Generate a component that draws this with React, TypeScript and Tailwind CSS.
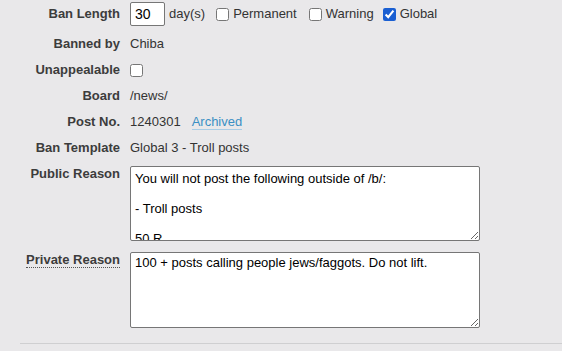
import React from 'react';

const font = { fontFamily: '"Liberation Sans", Arial, sans-serif' };

const Label = ({ children, abbr }: { children: React.ReactNode; abbr?: boolean }) => (
  <div className="w-[120px] shrink-0 text-right font-bold text-[#3c3c3c]">
    {abbr ? (
      <span className="border-b border-dotted border-[#555]">{children}</span>
    ) : (
      children
    )}
  </div>
);

const Check = ({ checked, label }: { checked?: boolean; label?: string }) => (
  <label className="flex items-center gap-[4px]">
    <input
      type="checkbox"
      defaultChecked={checked}
      className="m-0 w-[13px] h-[13px] accent-[#1a5fd2]"
    />
    {label && <span>{label}</span>}
  </label>
);

export default function App() {
  return (
    <div
      className="w-[562px] h-[351px] overflow-hidden bg-[#e9e8ea] text-[13px] text-[#333]"
      style={font}
    >
      {/* ban length */}
      <div className="flex h-[31px] pt-[2px] gap-[10px] leading-[24px]">
        <Label>Ban Length</Label>
        <div className="flex items-start">
          <input
            defaultValue="30"
            className="w-[35px] h-[24px] bg-white border border-[#767676] rounded-[2px] px-[4px] text-[14px] text-black outline-none"
          />
          <div className="flex items-center h-[24px]">
            <span className="ml-[4px]">day(s)</span>
            <div className="ml-[11px]">
              <Check label="Permanent" />
            </div>
            <div className="ml-[12px]">
              <Check label="Warning" />
            </div>
            <div className="ml-[9px]">
              <Check checked label="Global" />
            </div>
          </div>
        </div>
      </div>

      <div className="flex h-[26px] items-center gap-[10px]">
        <Label>Banned by</Label>
        <div>Chiba</div>
      </div>

      <div className="flex h-[26px] items-center gap-[10px]">
        <Label>Unappealable</Label>
        <Check />
      </div>

      <div className="flex h-[26px] items-center gap-[10px]">
        <Label>Board</Label>
        <div>/news/</div>
      </div>

      <div className="flex h-[26px] items-center gap-[10px]">
        <Label>Post No.</Label>
        <div className="flex items-center gap-[11px]">
          <span>1240301</span>
          <a href="#" className="text-[#3a8fc4] border-b border-[#a9cde6] leading-[15px]">
            Archived
          </a>
        </div>
      </div>

      <div className="flex h-[26px] items-center gap-[10px]">
        <Label>Ban Template</Label>
        <div>Global 3 - Troll posts</div>
      </div>

      {/* reasons */}
      <div className="flex pt-[5px] pb-[6px] gap-[10px] leading-[16px]">
        <Label>Public Reason</Label>
        <textarea
          className="w-[350px] h-[75px] bg-white border border-[#767676] rounded-[2px] px-[4px] pt-[4px] text-[13px] leading-[15px] text-black outline-none overflow-hidden"
          defaultValue={'You will not post the following outside of /b/:\n\n- Troll posts\n\n50 R'}
        />
      </div>

      <div className="flex pt-[5px] gap-[10px] leading-[16px]">
        <Label abbr>Private Reason</Label>
        <textarea
          className="w-[350px] h-[76px] bg-white border border-[#767676] rounded-[2px] px-[4px] pt-[2px] text-[13px] leading-[15px] text-black outline-none overflow-hidden"
          defaultValue="100 + posts calling people jews/faggots. Do not lift."
        />
      </div>

      <div className="ml-[20px] mt-[15px] border-t border-[#cfcfd1]" />
    </div>
  );
}
